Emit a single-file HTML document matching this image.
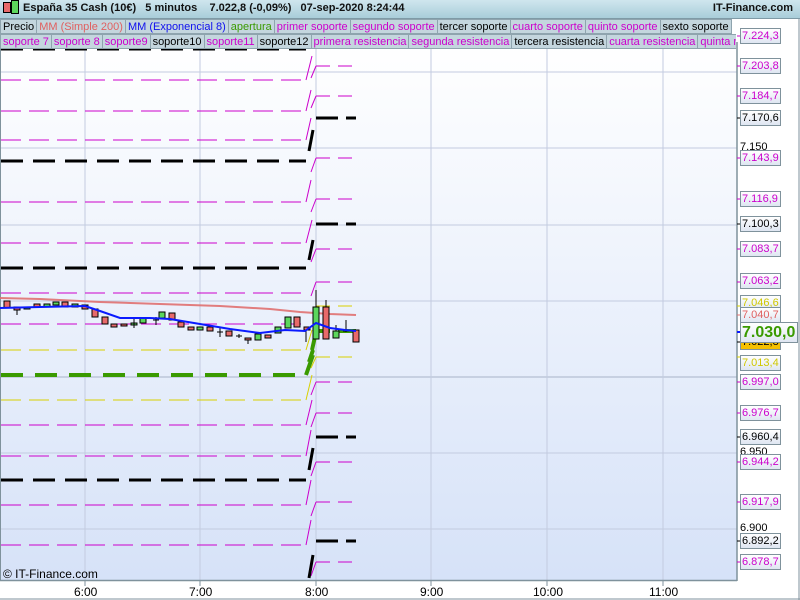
<!DOCTYPE html>
<html><head><meta charset="utf-8"><style>
body{margin:0;width:800px;height:600px;overflow:hidden;background:#fff;font-family:"Liberation Sans",sans-serif;position:relative}
#hdr{position:absolute;left:0;top:0;width:800px;height:18px;background:linear-gradient(#cfe6ee,#a9cdd9);border-bottom:1px solid #7f9aa6;font-size:11px;font-weight:bold;color:#111}
.row{position:absolute;left:0;height:15px;font-size:11px;white-space:nowrap;line-height:14px}
.row span{display:inline-block;background:#c4d6de;border:1px solid #8fa4ae;padding:0 2px;margin-right:-1px;height:13px}
.lbl{position:absolute;left:740px;width:38px;height:14px;border:1px solid #7f929c;background:linear-gradient(#fff,#dfe6f2);font-size:11px;line-height:14px;text-align:left;padding-left:1px;overflow:hidden;white-space:nowrap}
.tk{position:absolute;left:740px;font-size:11px;color:#000}
</style></head><body>
<svg width="800" height="600" style="position:absolute;left:0;top:0">
<defs><linearGradient id="bg" x1="0" y1="0" x2="0" y2="1"><stop offset="0" stop-color="#ffffff"/><stop offset="1" stop-color="#d6e2f8"/></linearGradient></defs>
<rect x="1" y="42" width="736" height="538" fill="url(#bg)"/>
<g stroke="#c3cbe0" stroke-width="1">
<line x1="1" y1="72" x2="737" y2="72"/><line x1="1" y1="148" x2="737" y2="148"/><line x1="1" y1="225" x2="737" y2="225"/><line x1="1" y1="301" x2="737" y2="301"/><line x1="1" y1="377" x2="737" y2="377" stroke="#a9b4c8"/><line x1="1" y1="453" x2="737" y2="453"/><line x1="1" y1="529" x2="737" y2="529"/>
<line x1="85" y1="42" x2="85" y2="580"/><line x1="200" y1="42" x2="200" y2="580"/><line x1="316" y1="42" x2="316" y2="580"/><line x1="431" y1="42" x2="431" y2="580"/><line x1="547" y1="42" x2="547" y2="580"/><line x1="663" y1="42" x2="663" y2="580"/>
</g>
<line x1="0.5" y1="42" x2="0.5" y2="580" stroke="#7f929c"/>
<line x1="737" y1="42" x2="737" y2="581" stroke="#7f929c" stroke-width="1.5"/>
<line x1="0" y1="580.5" x2="737" y2="580.5" stroke="#7f929c" stroke-width="1.5"/>
<g stroke="#7f929c"><line x1="85" y1="581" x2="85" y2="586"/><line x1="200" y1="581" x2="200" y2="586"/><line x1="316" y1="581" x2="316" y2="586"/><line x1="431" y1="581" x2="431" y2="586"/><line x1="547" y1="581" x2="547" y2="586"/><line x1="663" y1="581" x2="663" y2="586"/></g>
<g stroke="#cc00cc" stroke-width="1" fill="none">
<g stroke-dasharray="20 8">
<line x1="1" y1="80" x2="306" y2="80"/><line x1="1" y1="111" x2="306" y2="111"/><line x1="1" y1="140" x2="306" y2="140"/><line x1="1" y1="202" x2="306" y2="202"/><line x1="1" y1="243" x2="306" y2="243"/><line x1="1" y1="293" x2="306" y2="293"/><line x1="1" y1="324" x2="306" y2="324"/><line x1="1" y1="425" x2="306" y2="425"/><line x1="1" y1="456" x2="306" y2="456"/><line x1="1" y1="505" x2="306" y2="505"/><line x1="1" y1="545" x2="306" y2="545"/>
</g>
<g stroke-dasharray="14 8">
<line x1="316" y1="66" x2="356" y2="66"/><line x1="316" y1="96" x2="356" y2="96"/><line x1="316" y1="158" x2="356" y2="158"/><line x1="316" y1="199" x2="356" y2="199"/><line x1="316" y1="249" x2="356" y2="249"/><line x1="316" y1="282" x2="356" y2="282"/><line x1="316" y1="382" x2="356" y2="382"/><line x1="316" y1="413" x2="356" y2="413"/><line x1="316" y1="462" x2="356" y2="462"/><line x1="316" y1="502" x2="356" y2="502"/><line x1="316" y1="562" x2="356" y2="562"/>
</g>
<path d="M306 80L312 56M311 78L316 66M306 111L311 90M311 108L316 96M306 140L311 118M306 202L311 180M311 172L316 158M306 243L312 220M311 212L316 199M311 262L316 249M311 296L316 282M306 425L312 400M311 395L316 382M306 456L311 430M311 427L316 413M306 505L311 480M311 476L316 462M306 545L311 520M311 516L316 502M311 576L316 562"/>
</g>
<g stroke="#d8d000" stroke-width="1" fill="none">
<line x1="1" y1="350" x2="306" y2="350" stroke-dasharray="20 8"/><line x1="1" y1="400" x2="306" y2="400" stroke-dasharray="20 8"/>
<line x1="316" y1="306" x2="356" y2="306" stroke-dasharray="14 8"/><line x1="316" y1="357" x2="356" y2="357" stroke-dasharray="14 8"/>
<path d="M306 350L312 330M306 400L312 375M311 368L316 357"/>
</g>
<g stroke="#000" stroke-width="3" fill="none">
<g stroke-dasharray="22 10">
<line x1="1" y1="49" x2="306" y2="49"/><line x1="1" y1="161" x2="306" y2="161"/><line x1="1" y1="268" x2="306" y2="268"/><line x1="1" y1="480" x2="306" y2="480"/>
</g>
<g stroke-dasharray="22 8"><line x1="316" y1="118" x2="356" y2="118"/><line x1="316" y1="224" x2="356" y2="224"/><line x1="316" y1="437" x2="356" y2="437"/><line x1="316" y1="541" x2="356" y2="541"/></g>
<path d="M309 151L313 130M309 260L313 240M309 470L313 448M309 578L313 555"/>
</g>
<g stroke="#3a9a00" stroke-width="4" fill="none">
<line x1="1" y1="375" x2="300" y2="375" stroke-dasharray="22 12"/>
<path d="M306 375L313 355M309 362L313 350M312 350L316 332M318 331L330 331M338 331L356 331" />
</g>
<path d="M0 298L40 299L100 302L160 304L220 306L270 309L300 312L330 314L356 315" stroke="#e07070" stroke-width="2" fill="none" opacity="0.9"/>
<g stroke="#000" stroke-width="1">
<g fill="#e86a6a">
<rect x="4" y="301" width="6" height="7"/><rect x="14" y="307" width="6" height="3"/><rect x="34" y="304" width="6" height="3"/><rect x="62" y="302" width="6" height="5"/><rect x="82" y="305" width="6" height="4"/><rect x="92" y="309" width="6" height="8"/><rect x="102" y="317" width="6" height="7"/><rect x="111" y="324" width="6" height="3"/><rect x="121" y="324" width="6" height="2"/><rect x="169" y="313" width="6" height="7"/><rect x="178" y="322" width="6" height="5"/><rect x="188" y="327" width="6" height="3"/><rect x="207" y="327" width="6" height="4"/><rect x="226" y="331" width="6" height="5"/><rect x="245" y="338" width="6" height="2"/><rect x="265" y="335" width="6" height="3"/><rect x="294" y="317" width="6" height="10"/><rect x="304" y="327" width="6" height="3"/><rect x="323" y="307" width="6" height="32"/><rect x="353" y="330" width="6" height="12"/>
</g>
<g fill="#5cd65c">
<rect x="24" y="307" width="6" height="2"/><rect x="44" y="304" width="6" height="3"/><rect x="53" y="302" width="6" height="3"/><rect x="72" y="304" width="6" height="3"/><rect x="131" y="323" width="6" height="2"/><rect x="140" y="318" width="6" height="5"/><rect x="159" y="312" width="6" height="6"/><rect x="197" y="327" width="6" height="3"/><rect x="255" y="334" width="6" height="6"/><rect x="275" y="327" width="6" height="6"/><rect x="285" y="317" width="6" height="11"/><rect x="313" y="307" width="6" height="32"/><rect x="333" y="331" width="6" height="7"/>
</g>
<path d="M17 310v5M134 318v10M153 320h6M156 317v8M217 332h6M220 327v10M236 336h6M239 334v4M248 340v4M306 330v12M316 290v17M326 300v7M336 325v6M343 331h6M346 320v12"/>
</g>
<path d="M0 308L40 307L85 306L100 311L120 318L150 318L170 319L200 324L230 329L260 333L285 330L305 331L316 323L330 328L345 330L356 331" stroke="#0a1aff" stroke-width="2" fill="none"/>
<g stroke="#cc00cc"><line x1="737" y1="36" x2="741" y2="36"/><line x1="737" y1="66" x2="741" y2="66"/><line x1="737" y1="96" x2="741" y2="96"/><line x1="737" y1="158" x2="741" y2="158"/><line x1="737" y1="199" x2="741" y2="199"/><line x1="737" y1="249" x2="741" y2="249"/><line x1="737" y1="282" x2="741" y2="282"/><line x1="737" y1="382" x2="741" y2="382"/><line x1="737" y1="413" x2="741" y2="413"/><line x1="737" y1="462" x2="741" y2="462"/><line x1="737" y1="502" x2="741" y2="502"/><line x1="737" y1="562" x2="741" y2="562"/></g>
<g stroke="#000"><line x1="737" y1="118" x2="741" y2="118"/><line x1="737" y1="224" x2="741" y2="224"/><line x1="737" y1="437" x2="741" y2="437"/><line x1="737" y1="541" x2="741" y2="541"/><line x1="737" y1="342" x2="741" y2="342"/></g>
<g stroke="#d8d000"><line x1="737" y1="306" x2="741" y2="306"/><line x1="737" y1="357" x2="741" y2="357"/></g>
<line x1="737" y1="315" x2="741" y2="315" stroke="#e07070"/><line x1="737" y1="332" x2="741" y2="332" stroke="#0a1aff" stroke-width="2"/>
<line x1="799" y1="18" x2="799" y2="600" stroke="#7f929c"/>
<line x1="0" y1="599" x2="800" y2="599" stroke="#7f929c"/>
</svg>
<div id="hdr"><span style="position:absolute;left:3px;top:2px;width:6px;height:9px;background:#e86a6a;border:1px solid #000"></span><span style="position:absolute;left:11px;top:0;width:6px;height:12px;background:#5cd65c;border:1px solid #000"></span><span style="position:absolute;left:23px;top:2px">España 35 Cash (10€)&nbsp;&nbsp;&nbsp;5 minutos&nbsp;&nbsp;&nbsp;&nbsp;7.022,8 (-0,09%)&nbsp;&nbsp;&nbsp;07-sep-2020 8:24:44</span><span style="position:absolute;right:7px;top:2px">IT-Finance.com</span></div>
<div class="row" style="top:19px"><span>Precio</span><span style="color:#e06060">MM (Simple 200)</span><span style="color:#1010ee">MM (Exponencial 8)</span><span style="color:#3a9a00">apertura</span><span style="color:#cc00cc">primer soporte</span><span style="color:#cc00cc">segundo soporte</span><span>tercer soporte</span><span style="color:#cc00cc">cuarto soporte</span><span style="color:#cc00cc">quinto soporte</span><span>sexto soporte</span></div>
<div class="row" style="top:34px;width:736px;overflow:hidden"><span style="color:#cc00cc">soporte 7</span><span style="color:#cc00cc">soporte 8</span><span style="color:#cc00cc">soporte9</span><span>soporte10</span><span style="color:#cc00cc">soporte11</span><span>soporte12</span><span style="color:#cc00cc">primera resistencia</span><span style="color:#cc00cc">segunda resistencia</span><span>tercera resistencia</span><span style="color:#cc00cc">cuarta resistencia</span><span style="color:#cc00cc">quinta resistencia</span></div>
<div class="tk" style="top:141px">7.150</div><div class="tk" style="top:446px">6.950</div><div class="tk" style="top:522px">6.900</div>
<div class="lbl" style="top:28px;color:#cc00cc">7.224,3</div>
<div class="lbl" style="top:58px;color:#cc00cc">7.203,8</div>
<div class="lbl" style="top:88px;color:#cc00cc">7.184,7</div>
<div class="lbl" style="top:110px;color:#000">7.170,6</div>
<div class="lbl" style="top:150px;color:#cc00cc">7.143,9</div>
<div class="lbl" style="top:191px;color:#cc00cc">7.116,9</div>
<div class="lbl" style="top:216px;color:#000">7.100,3</div>
<div class="lbl" style="top:241px;color:#cc00cc">7.083,7</div>
<div class="lbl" style="top:273px;color:#cc00cc">7.063,2</div>
<div class="lbl" style="top:295px;color:#d0c800">7.046,6</div>
<div class="lbl" style="top:307px;color:#e06060">7.040,7</div>
<div class="lbl" style="top:334px;color:#000;background:#f5c000">7.022,8</div>
<div class="lbl" style="top:322px;width:55px;height:19px;font-size:16px;line-height:19px;font-weight:bold;color:#3a9a00">7.030,0</div>
<div class="lbl" style="top:355px;color:#d0c800">7.013,4</div>
<div class="lbl" style="top:374px;color:#cc00cc">6.997,0</div>
<div class="lbl" style="top:405px;color:#cc00cc">6.976,7</div>
<div class="lbl" style="top:429px;color:#000">6.960,4</div>
<div class="lbl" style="top:454px;color:#cc00cc">6.944,2</div>
<div class="lbl" style="top:494px;color:#cc00cc">6.917,9</div>
<div class="lbl" style="top:533px;color:#000">6.892,2</div>
<div class="lbl" style="top:554px;color:#cc00cc">6.878,7</div>
<div style="position:absolute;left:3px;top:567px;font-size:12px">© IT-Finance.com</div>
<div style="position:absolute;top:585px;font-size:12px;left:74px">6:00</div>
<div style="position:absolute;top:585px;font-size:12px;left:189px">7:00</div>
<div style="position:absolute;top:585px;font-size:12px;left:305px">8:00</div>
<div style="position:absolute;top:585px;font-size:12px;left:420px">9:00</div>
<div style="position:absolute;top:585px;font-size:12px;left:533px">10:00</div>
<div style="position:absolute;top:585px;font-size:12px;left:649px">11:00</div>
</body></html>
